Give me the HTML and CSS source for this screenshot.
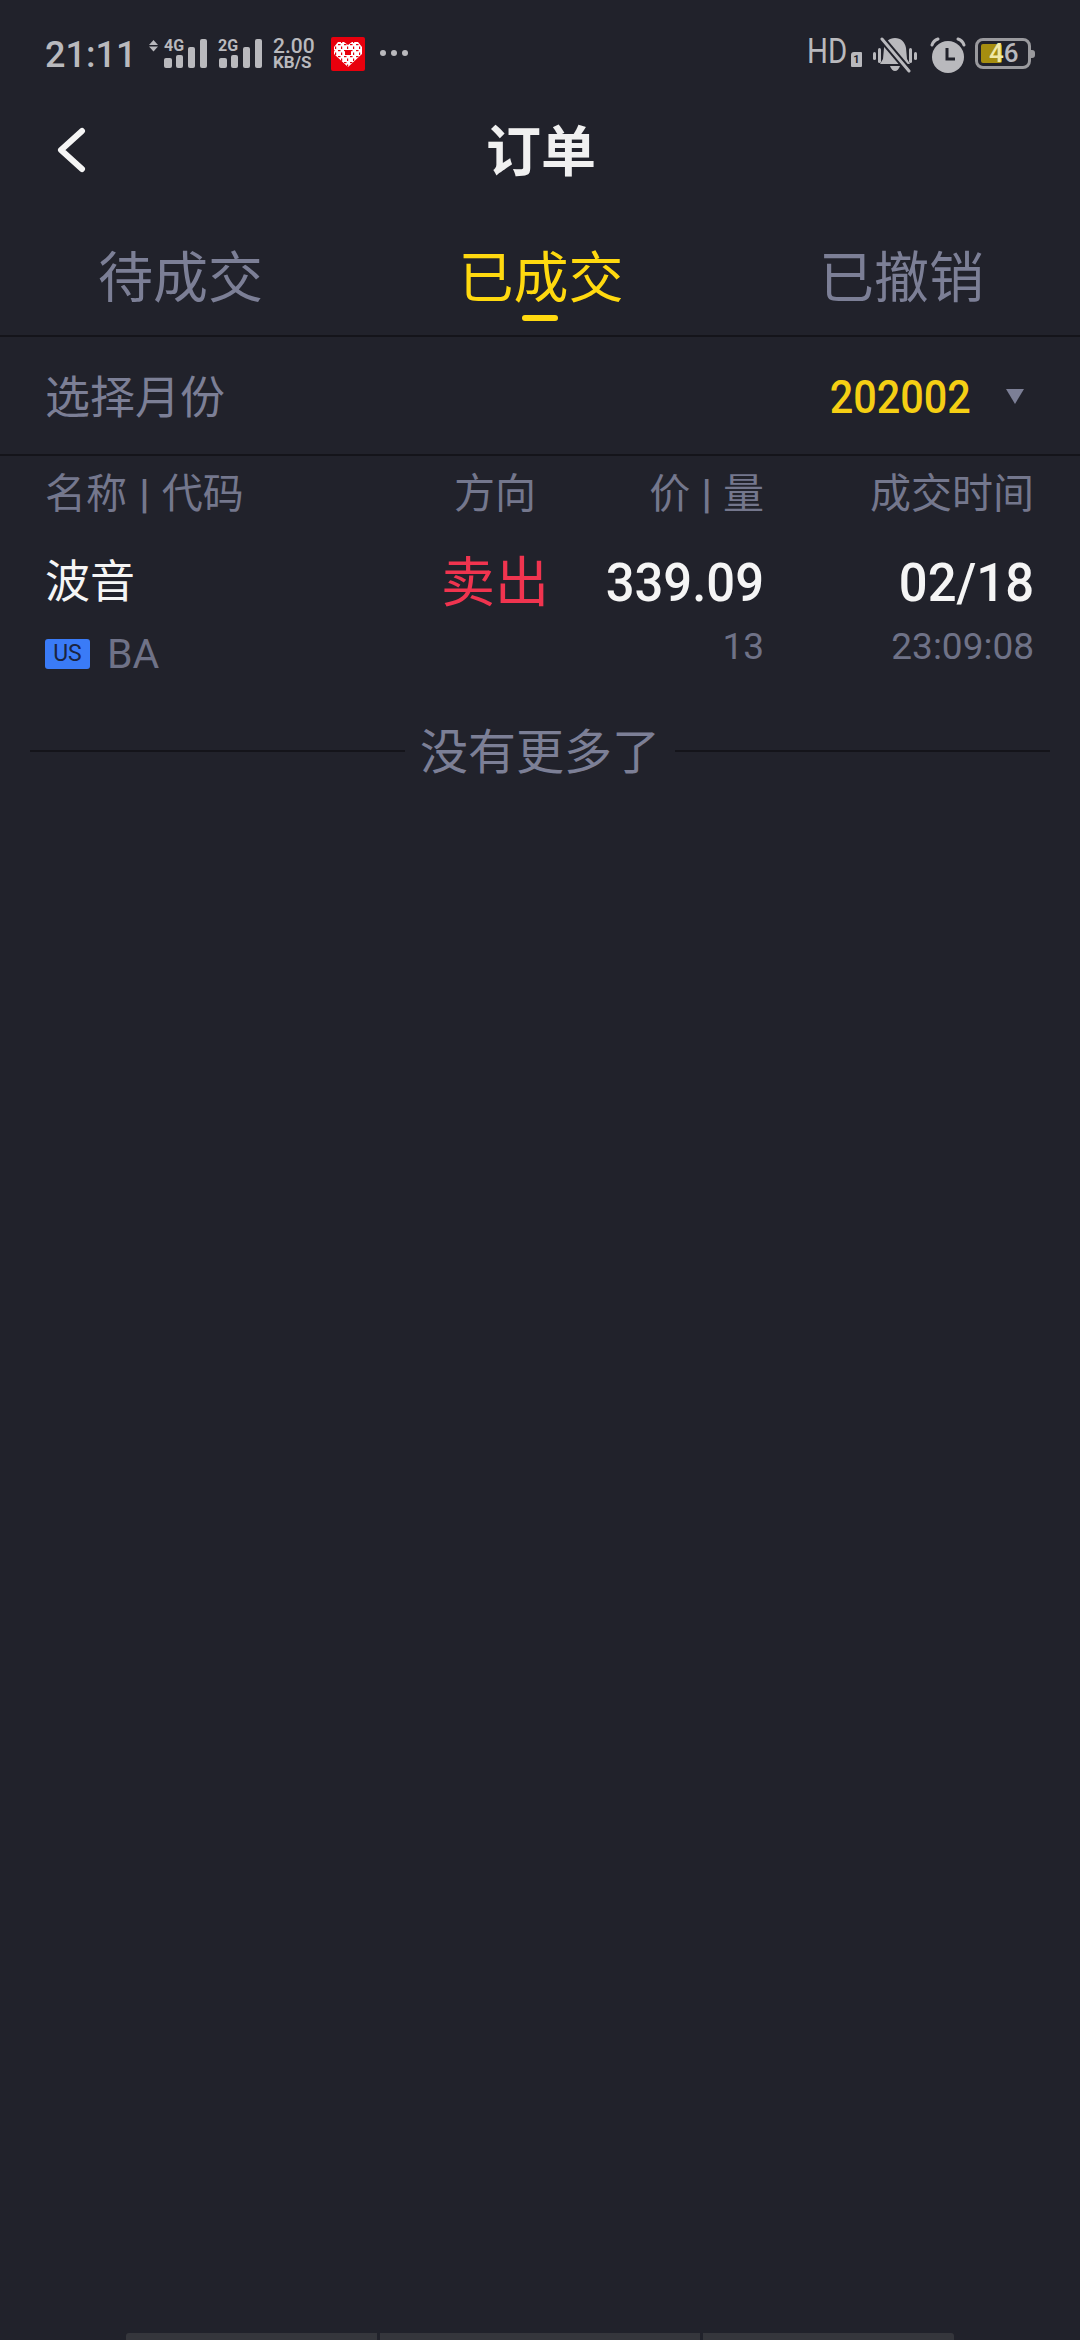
FILE: index.html
```html
<!DOCTYPE html>
<html>
    <head>
        <title>订单</title>
        <link rel="stylesheet" href="styles.css">
    </head>
    <body>
        <div class="status-bar">
            <div class="status-left">
                <span class="status-time">21:11</span>
                <svg class="signal-main" width="58" height="36" viewBox="0 0 58 36">
                    <path d="M4.500 3l4.500 5H0z"/>
                    <path d="M4.500 14.500L0 9.500h9z"/>
                    <text x="15" y="14" class="signal-label">4G</text>
                    <rect x="15" y="21" width="8" height="10" rx="2"/>
                    <rect x="27" y="18" width="7" height="13" rx="2"/>
                    <rect x="39" y="10" width="7" height="21" rx="2"/>
                    <rect x="51" y="2" width="7" height="29" rx="2"/>
                </svg>
                <svg class="signal-second" width="44" height="36" viewBox="0 0 44 36">
                    <text x="0" y="14" class="signal-label">2G</text>
                    <rect x="1" y="21" width="8" height="10" rx="2"/>
                    <rect x="13" y="18" width="7" height="13" rx="2"/>
                    <rect x="25" y="10" width="7" height="21" rx="2"/>
                    <rect x="37" y="2" width="7" height="29" rx="2"/>
                </svg>
                <div class="net-speed">
                    <span class="net-value">2.00</span>
                    <span class="net-unit">KB/S</span>
                </div>
                <svg class="app-icon" width="34" height="34" viewBox="0 0 34 34">
                    <defs>
                        <pattern id="heartDots" width="6" height="6" patternUnits="userSpaceOnUse">
                            <rect x="1" y="1" width="2.500" height="1.200" fill="#e8000d"/>
                            <rect x="4" y="3.500" width="1.200" height="2.500" fill="#e8000d"/>
                        </pattern>
                    </defs>
                    <rect width="34" height="34" rx="2" fill="#e8000d"/>
                    <path d="M3 10l4-5h6l4 3 4-3h6l4 5v7L17 30 3 17z" fill="#fff"/>
                    <path d="M3 10l4-5h6l4 3 4-3h6l4 5v7L17 30 3 17z" fill="url(#heartDots)"/>
                    <rect x="14" y="13" width="6" height="5" fill="#e8000d"/>
                </svg>
                <div class="status-dots"><i></i><i></i><i></i></div>
            </div>
            <div class="status-right">
                <div class="hd-icon">
                    <span class="hd-label">HD</span>
                    <span class="hd-sim">1</span>
                </div>
                <svg class="bell-icon" width="46" height="36" viewBox="0 0 44 36">
                    <path d="M22 1c6 0 10 4 11 10l1 11 3 5H7l3-5 1-11c1-6 5-10 11-10z"/>
                    <path d="M17 29h10c-1 3-3 5-5 5s-4-2-5-5z"/>
                    <path d="M9 2l27 32" class="bell-cut"/>
                    <path d="M9 2l27 32" class="bell-slash"/>
                    <rect x="0" y="15" width="3" height="8" rx="1.500"/>
                    <rect x="5" y="11" width="3" height="15" rx="1.500"/>
                    <rect x="36" y="11" width="3" height="15" rx="1.500"/>
                    <rect x="41" y="15" width="3" height="8" rx="1.500"/>
                </svg>
                <svg class="clock-icon" width="36" height="36" viewBox="0 0 36 36">
                    <circle cx="18" cy="20" r="16"/>
                    <path d="M17 11v11h8" class="clock-hands"/>
                    <path d="M2 8c1-3 3-5 6-6" class="clock-ears"/>
                    <path d="M28 2c3 1 5 3 6 6" class="clock-ears"/>
                </svg>
                <div class="battery">
                    <div class="battery-fill"></div>
                    <span class="battery-text"><b>4</b>6</span>
                </div>
            </div>
        </div>

        <div class="nav-bar">
            <a href="#" class="back-btn">
                <svg width="30" height="48" viewBox="0 0 30 48">
                    <path d="M25 5L4 24l21 19"/>
                </svg>
            </a>
            <h1>订单</h1>
        </div>

        <div class="tabs">
            <div class="tab">待成交</div>
            <div class="tab active">已成交</div>
            <div class="tab">已撤销</div>
        </div>

        <div class="month-row">
            <span class="month-label">选择月份</span>
            <div class="month-picker">
                <span class="month-value">202002</span>
                <span class="month-arrow"></span>
            </div>
        </div>

        <div class="order-grid order-head">
            <div class="col-name">名称 <b>|</b> 代码</div>
            <div class="col-side">方向</div>
            <div class="col-price">价 <b>|</b> 量</div>
            <div class="col-time">成交时间</div>
        </div>

        <div class="order-grid order-row">
            <div class="col-name">
                <div class="stock-name">波音</div>
                <div class="stock-code">
                    <span class="market-tag">US</span>
                    <span class="code-text">BA</span>
                </div>
            </div>
            <div class="col-side side-sell">卖出</div>
            <div class="col-price">
                <div class="main-num">339.09</div>
                <div class="sub-num">13</div>
            </div>
            <div class="col-time">
                <div class="main-num">02/18</div>
                <div class="sub-num">23:09:08</div>
            </div>
        </div>

        <div class="list-end">
            <span class="end-line"></span>
            <span class="end-text">没有更多了</span>
            <span class="end-line"></span>
        </div>

        <div class="bottom-bar">
            <div class="bottom-seg seg-first"></div>
            <div class="bottom-seg seg-mid"></div>
            <div class="bottom-seg seg-last"></div>
        </div>
    </body>
</html>
```

FILE: styles.css
```css
* {
    box-sizing: border-box;
}

html, body {
    margin: 0;
    height: 2340px;
}

body {
    position: relative;
    overflow: hidden;
    background: #21222b;
    color: #f2f2f2;
    font-family: Roboto, "Noto Sans CJK SC", sans-serif;
}

/* status bar */
.status-bar {
    display: flex;
    justify-content: space-between;
    height: 80px;
    padding: 37px 45px 0 45px;
    color: #b9b9bd;
}

.status-bar svg {
    fill: #b9b9bd;
    display: block;
}

.status-left, .status-right {
    display: flex;
    align-items: flex-start;
    height: 36px;
}

.status-time {
    font-size: 36px;
    font-weight: 500;
    line-height: 36px;
    width: 82px;
}

.signal-main {
    margin-left: 22px;
}

.signal-second {
    margin-left: 11px;
}

.signal-label {
    font-family: Roboto, sans-serif;
    font-size: 16px;
    font-weight: 700;
}

.net-speed {
    display: flex;
    flex-direction: column;
    margin-left: 11px;
    width: 42px;
    font-weight: 500;
}

.net-value {
    font-size: 21px;
    line-height: 18px;
}

.net-unit {
    font-size: 17px;
    font-weight: 700;
    line-height: 14px;
    white-space: nowrap;
}

.status-bar .app-icon {
    margin-left: 16px;
    fill: none;
}

.status-dots {
    display: flex;
    gap: 5px;
    margin-left: 15px;
    padding-top: 13px;
}

.status-dots i {
    width: 6px;
    height: 6px;
    border-radius: 50%;
    background: #b9b9bd;
}

.hd-icon {
    display: flex;
    align-items: flex-end;
    justify-content: space-between;
    width: 55px;
    height: 30px;
}

.hd-label {
    width: 40px;
    font-size: 35px;
    line-height: 30px;
    transform: scaleX(0.84);
    transform-origin: left center;
}

.hd-sim {
    flex: none;
    width: 11px;
    height: 15px;
    border-radius: 3px 1px 1px 1px;
    background: #b9b9bd;
    color: #21222b;
    font-size: 11px;
    font-weight: 700;
    line-height: 16px;
    text-align: center;
}

.bell-icon {
    margin-left: 10px;
}

.status-bar .bell-cut {
    fill: none;
    stroke: #21222b;
    stroke-width: 7;
}

.status-bar .bell-slash {
    fill: none;
    stroke: #b9b9bd;
    stroke-width: 3;
    stroke-linecap: round;
}

.clock-icon {
    margin-left: 12px;
}

.status-bar .clock-hands {
    fill: none;
    stroke: #21222b;
    stroke-width: 3;
}

.status-bar .clock-ears {
    fill: none;
    stroke: #b9b9bd;
    stroke-width: 3;
    stroke-linecap: round;
}

.battery {
    position: relative;
    width: 56px;
    height: 31px;
    margin: 1px 4px 0 9px;
    border: 3px solid #9a9a9e;
    border-radius: 8px;
}

.battery:after {
    content: "";
    position: absolute;
    right: -7px;
    top: 9px;
    width: 4px;
    height: 8px;
    border-radius: 0 3px 3px 0;
    background: #9a9a9e;
}

.battery-fill {
    position: absolute;
    left: 3px;
    top: 3px;
    width: 21px;
    height: 19px;
    border-radius: 2px;
    background: #a68e10;
}

.battery-text {
    position: absolute;
    left: 11px;
    top: 0;
    font-size: 26px;
    font-weight: 500;
    line-height: 25px;
}

.battery-text b {
    font-weight: 500;
    color: #f0e9a8;
}

/* title */
.nav-bar {
    position: relative;
    display: flex;
    align-items: center;
    justify-content: center;
    height: 140px;
    padding: 3px 0 0 2px;
}

.back-btn {
    position: absolute;
    left: 57px;
    top: 46px;
}

.back-btn svg {
    display: block;
    fill: none;
    stroke: #f5f5f5;
    stroke-width: 6;
    stroke-linecap: round;
    stroke-linejoin: round;
}

h1 {
    margin: 0;
    font-size: 55px;
    font-weight: 700;
    line-height: 70px;
    color: #f0f0f0;
}

/* tabs */
.tabs {
    display: flex;
    justify-content: space-between;
    height: 117px;
    padding: 0 96px 0 98px;
    border-bottom: 2px solid #14141a;
}

.tab {
    position: relative;
    font-size: 55px;
    line-height: 116px;
    color: #7c7f96;
}

.tab.active {
    color: #ffd90f;
}

.tab.active:after {
    content: "";
    position: absolute;
    left: 50%;
    bottom: 14px;
    width: 36px;
    height: 6px;
    margin-left: -19px;
    border-radius: 3px;
    background: #ffd90f;
}

/* month */
.month-row {
    display: flex;
    align-items: center;
    justify-content: space-between;
    height: 119px;
    padding: 0 56px 0 45px;
    border-bottom: 2px solid #14141a;
}

.month-label {
    font-size: 45px;
    padding-bottom: 3px;
    color: #7c7f96;
}

.month-picker {
    display: flex;
    align-items: center;
    gap: 35px;
    padding-top: 2px;
}

.month-value {
    font-size: 46px;
    font-weight: 500;
    color: #f5cf14;
    transform: scaleX(0.9);
    transform-origin: right center;
}

.month-arrow {
    width: 0;
    height: 0;
    border-left: 9px solid transparent;
    border-right: 9px solid transparent;
    border-top: 15px solid #7c7f96;
}

/* order list */
.order-grid {
    display: grid;
    grid-template-columns: 385px 130px 204px 270px;
    padding: 0 46px 0 45px;
}

.order-head {
    height: 74px;
    align-items: center;
    padding: 0 45px 7px 45px;
    font-size: 41px;
    word-spacing: 2px;
    color: #74778d;
}

.order-head b {
    font-weight: 700;
}

.order-head .col-price {
    word-spacing: 1px;
}

.col-side {
    text-align: center;
}

.col-price, .col-time {
    text-align: right;
}

.order-row {
    height: 186px;
    padding-top: 23px;
}

.stock-name {
    font-size: 45px;
    line-height: 60px;
    color: #f5f5f5;
}

.stock-code {
    display: flex;
    align-items: center;
    gap: 17px;
    margin-top: 26px;
}

.market-tag {
    width: 45px;
    height: 30px;
    border-radius: 3px;
    background: #3a7bf7;
    color: #1a2440;
    font-size: 23px;
    line-height: 30px;
    text-align: center;
}

.code-text {
    font-size: 41px;
    line-height: 30px;
    color: #6f7287;
}

.side-sell {
    font-size: 54px;
    line-height: 62px;
    color: #f0344f;
}

.main-num {
    font-size: 54px;
    font-weight: 500;
    line-height: 60px;
    color: #f5f5f5;
    transform: scaleX(0.94);
    transform-origin: right center;
}

.sub-num {
    font-size: 37px;
    line-height: 40px;
    margin-top: 14px;
    color: #6f7287;
}

/* end of list */
.list-end {
    display: flex;
    align-items: center;
    justify-content: center;
    gap: 15px;
    height: 70px;
    padding: 0 30px;
}

.end-line {
    flex: 1;
    height: 2px;
    background: #14141a;
}

.end-text {
    font-size: 48px;
    padding-bottom: 6px;
    color: #7c7f96;
}

/* bottom gesture bar */
.bottom-bar {
    position: absolute;
    left: 126px;
    bottom: 0;
    display: flex;
    gap: 3px;
    width: 828px;
    height: 7px;
}

.bottom-seg {
    height: 7px;
    background: #35363c;
}

.seg-first {
    width: 251px;
    border-radius: 3px 0 0 0;
}

.seg-mid {
    width: 320px;
}

.seg-last {
    width: 251px;
    border-radius: 0 3px 0 0;
}
```
